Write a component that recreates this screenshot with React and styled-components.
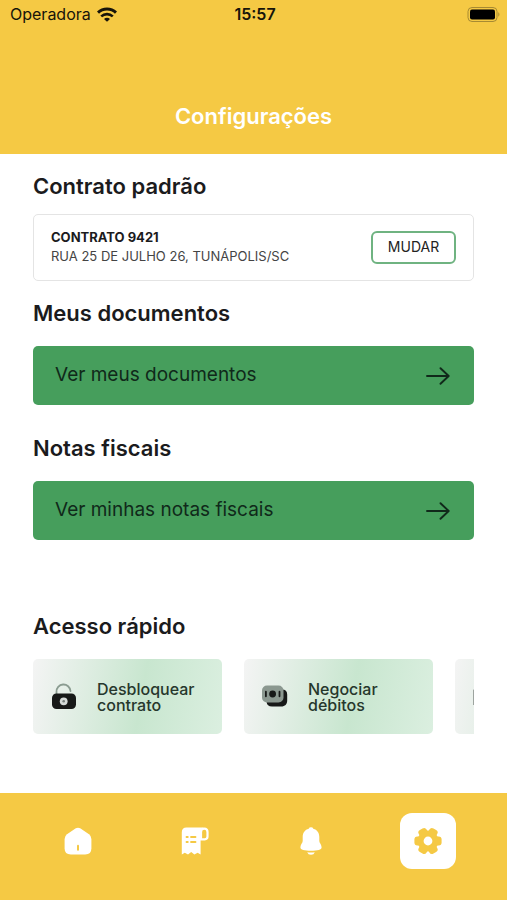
import React from 'react';
import styled, { createGlobalStyle } from 'styled-components';

const yellow = '#f5c944';
const green = '#469e5c';

const GlobalStyle = createGlobalStyle`
  * {
    box-sizing: border-box;
  }

  body {
    margin: 0;
    background: #fff;
    color: #1b1b1d;
    font-family: Inter, 'Liberation Sans', sans-serif;
  }
`;

const Screen = styled.div`
  display: flex;
  flex-direction: column;
  min-height: 100vh;
`;

const Header = styled.header`
  background: ${yellow};
  padding-bottom: 24px;
`;

const StatusBar = styled.div`
  display: grid;
  grid-template-columns: 1fr auto 1fr;
  align-items: center;
  height: 28px;
  padding: 0 7px 0 10px;
  color: #17140a;
  font-size: 16px;
`;

const Carrier = styled.span`
  display: flex;
  align-items: center;
  gap: 6px;
`;

const Clock = styled.span`
  font-weight: 600;
`;

const Battery = styled.svg`
  justify-self: end;
`;

const Title = styled.h1`
  margin: 74px 0 0;
  color: #fff;
  font-size: 22px;
  font-weight: 600;
  line-height: 28px;
  text-align: center;
`;

const Main = styled.main`
  flex: 1;
  padding: 18px 33px;
`;

const Section = styled.section`
  margin-top: ${(props) => props.$top || 0}px;
`;

const Heading = styled.h2`
  margin: 0 0 ${(props) => (props.$tight ? 14 : 19)}px;
  font-size: 22px;
  font-weight: 600;
  line-height: 28px;
`;

const Contract = styled.div`
  display: flex;
  align-items: center;
  justify-content: space-between;
  min-height: 67px;
  padding: 0 17px;
  border: 1px solid #e4e4e4;
  border-radius: 5px;
`;

const ContractInfo = styled.div`
  padding-bottom: 2px;
`;

const ContractName = styled.strong`
  display: block;
  font-size: 13px;
  font-weight: 700;
  line-height: 19px;
`;

const Address = styled.span`
  display: block;
  color: #444;
  font-size: 13px;
  line-height: 19px;
`;

const ChangeButton = styled.button`
  width: 85px;
  height: 33px;
  padding: 0 0 2px;
  border: 2px solid #6fb381;
  border-radius: 6px;
  background: #fff;
  color: #222;
  font-family: inherit;
  font-size: 14px;
`;

const LinkButton = styled.button`
  display: flex;
  align-items: center;
  justify-content: space-between;
  width: 100%;
  height: 59px;
  padding: 0 24px 0 22px;
  border: 0;
  border-radius: 5px;
  background: ${green};
  color: #10291a;
  font-family: inherit;
  font-size: 19px;
  text-align: left;
`;

const LinkLabel = styled.span`
  padding-bottom: 2px;
`;

const Shortcuts = styled.div`
  display: flex;
  gap: 22px;
  overflow: hidden;
`;

const Shortcut = styled.button`
  display: flex;
  flex: none;
  align-items: center;
  gap: 19px;
  width: 189px;
  height: 75px;
  padding: 0 16px;
  border: 0;
  border-radius: 5px;
  background: linear-gradient(100deg, #f4f4f4 0%, #c8e6cf 57%, #dbefe0 100%);
  color: #26372c;
  font-family: inherit;
  font-size: 16px;
  font-weight: 500;
  line-height: 16px;
  text-align: left;
`;

const Nav = styled.nav`
  display: grid;
  grid-template-columns: repeat(4, 1fr);
  justify-items: center;
  padding: 20px 21px 31px 20px;
  background: ${yellow};
`;

const Tab = styled.a`
  display: flex;
  align-items: center;
  justify-content: center;
  width: 56px;
  height: 56px;
  border-radius: 12px;
  background: ${(props) => (props.$active ? '#fff' : 'transparent')};
  color: ${(props) => (props.$active ? yellow : '#fff')};
`;

const WifiIcon = () => (
  <svg width="20" height="15" viewBox="0 0 20 15" fill="none" stroke="currentColor" strokeWidth="3">
    <path d="M1 5.6C6 .9 14 .9 19 5.6" />
    <path d="M4.2 9.4c3.4-3 8.2-3 11.6 0" strokeWidth="2.6" />
    <path d="M10 14.8 7 11.9c1.8-1.6 4.2-1.6 6 0Z" fill="currentColor" stroke="none" />
  </svg>
);

const BatteryIcon = () => (
  <Battery width="33" height="17" viewBox="0 0 33 17">
    <rect x="1" y="1.5" width="29" height="14" rx="4" fill="none" stroke="#a78a32" />
    <rect x="3" y="3.5" width="25" height="10" rx="2" fill="#000" />
    <path d="M31.3 6.3c1.5.6 1.5 3.8 0 4.4Z" fill="#a78a32" />
  </Battery>
);

const ArrowIcon = () => (
  <svg width="24" height="18" viewBox="0 0 24 18" fill="none" stroke="#10291a" strokeWidth="1.9" strokeLinecap="round" strokeLinejoin="round">
    <path d="M1 9h21.5M14.5 1.2l8.2 7.8-8.2 7.8" />
  </svg>
);

const UnlockIcon = () => (
  <svg width="29" height="30" viewBox="0 0 29 30">
    <path d="M7.5 13V10a7 7 0 0 1 14-1" fill="none" stroke="#8b9c91" strokeWidth="1.8" strokeLinecap="round" />
    <rect x="3" y="11.5" width="24" height="15.5" rx="4.5" fill="#171918" />
    <circle cx="14.7" cy="19.3" r="3.9" fill="#d5dad7" />
    <circle cx="14.7" cy="19.3" r="1.3" fill="#777f7b" />
  </svg>
);

const MoneyIcon = () => (
  <svg width="29" height="30" viewBox="0 0 29 30">
    <path d="M22 7.5c3.4 0 5.2 1.800 5.2 5v5.900c0 3.800-2.200 6-6 6H12c-3.400 0-5.200-1.400-5.400-4.400H18c2.800 0 4-1.300 4-4Z" fill="#171918" />
    <rect x="2" y="3.5" width="21.5" height="17" rx="5" fill="#8b9890" />
    <circle cx="12.6" cy="12" r="3.4" fill="#171918" />
    <path d="M5.9 9.7v4.6M19.5 9.7v4.6" stroke="#171918" strokeWidth="1.8" strokeLinecap="round" />
  </svg>
);

const FileIcon = () => (
  <svg width="29" height="30" viewBox="0 0 29 30">
    <path d="M5 6h19v17H2V8Z" fill="#9da49f" />
  </svg>
);

const HomeIcon = () => (
  <svg width="28" height="28" viewBox="0 0 28 28">
    <path d="M11.8 1.3Q14 0 16.2 1.3L25 7.2Q27.4 9 27.4 12v9.3q0 6.2-6.2 6.2H6.8Q.6 27.5.6 21.3V12Q.6 9 3 7.2Z" fill="currentColor" />
    <path d="M14 18.7v4" stroke={yellow} strokeWidth="2" strokeLinecap="round" />
  </svg>
);

const ReceiptIcon = () => (
  <svg width="28" height="28" viewBox="0 0 28 28" fill="none">
    <path d="M20 13V4.5C20 2.2 21.2.4 23 .4H5.5Q.8.4.8 5.2v22.2l3-1.6 3.2 1.6 3.2-2.4 3.200 2.4 3.2-1.600 3 1.600V13Z" fill="currentColor" />
    <path d="M20 12.3h3.800q2.700 0 2.700-2.700V5Q26.500 1.600 23.200 1.600 20 1.600 20 5Z" stroke="currentColor" strokeWidth="2.2" />
    <path d="M5.5 10h1.3M10 10h4.5M5.5 15h1.3M10 15h4.5" stroke={yellow} strokeWidth="1.8" strokeLinecap="round" />
  </svg>
);

const BellIcon = () => (
  <svg width="28" height="28" viewBox="0 0 28 28" fill="currentColor">
    <path d="M14 .3q1.8 0 2.3 1.4c3.8 1 6 4.1 6 8.1v4.2c0 2 2.3 3.5 2.3 6.3 0 2.6-4 3.5-10.6 3.5S3.4 22.9 3.4 20.3c0-2.8 2.3-4.3 2.3-6.3V9.8c0-4 2.2-7.1 6-8.1Q12.2.3 14 .3Z" />
    <path d="M10.2 25.2q3.8.4 7.6 0Q16.9 27.8 14 27.8t-3.8-2.6Z" />
  </svg>
);

const GearIcon = () => (
  <svg width="28" height="28" viewBox="0 0 28 28" fill="currentColor">
    <circle cx="14" cy="14" r="10.5" />
    {[0, 60, 120, 180, 240, 300].map((angle) => (
      <rect key={angle} x="17" y="9.5" width="10.6" height="9" rx="3" transform={`rotate(${angle} 14 14)`} />
    ))}
    <circle cx="14" cy="14" r="4.4" fill="#fff" />
  </svg>
);

export default function App() {
  return (
    <Screen>
      <GlobalStyle />
      <Header>
        <StatusBar>
          <Carrier>Operadora <WifiIcon /></Carrier>
          <Clock>15:57</Clock>
          <BatteryIcon />
        </StatusBar>
        <Title>Configurações</Title>
      </Header>

      <Main>
        <Section>
          <Heading $tight>Contrato padrão</Heading>
          <Contract>
            <ContractInfo>
              <ContractName>CONTRATO 9421</ContractName>
              <Address>RUA 25 DE JULHO 26, TUNÁPOLIS/SC</Address>
            </ContractInfo>
            <ChangeButton type="button">MUDAR</ChangeButton>
          </Contract>
        </Section>

        <Section $top={18}>
          <Heading>Meus documentos</Heading>
          <LinkButton type="button">
            <LinkLabel>Ver meus documentos</LinkLabel>
            <ArrowIcon />
          </LinkButton>
        </Section>

        <Section $top={29}>
          <Heading>Notas fiscais</Heading>
          <LinkButton type="button">
            <LinkLabel>Ver minhas notas fiscais</LinkLabel>
            <ArrowIcon />
          </LinkButton>
        </Section>

        <Section $top={72}>
          <Heading>Acesso rápido</Heading>
          <Shortcuts>
            <Shortcut type="button">
              <UnlockIcon />
              <span>Desbloquear<br />contrato</span>
            </Shortcut>
            <Shortcut type="button">
              <MoneyIcon />
              <span>Negociar<br />débitos</span>
            </Shortcut>
            <Shortcut type="button" aria-label="Faturas">
              <FileIcon />
            </Shortcut>
          </Shortcuts>
        </Section>
      </Main>

      <Nav>
        <Tab href="#inicio" aria-label="Início"><HomeIcon /></Tab>
        <Tab href="#faturas" aria-label="Faturas"><ReceiptIcon /></Tab>
        <Tab href="#avisos" aria-label="Avisos"><BellIcon /></Tab>
        <Tab href="#configuracoes" aria-label="Configurações" $active><GearIcon /></Tab>
      </Nav>
    </Screen>
  );
}
